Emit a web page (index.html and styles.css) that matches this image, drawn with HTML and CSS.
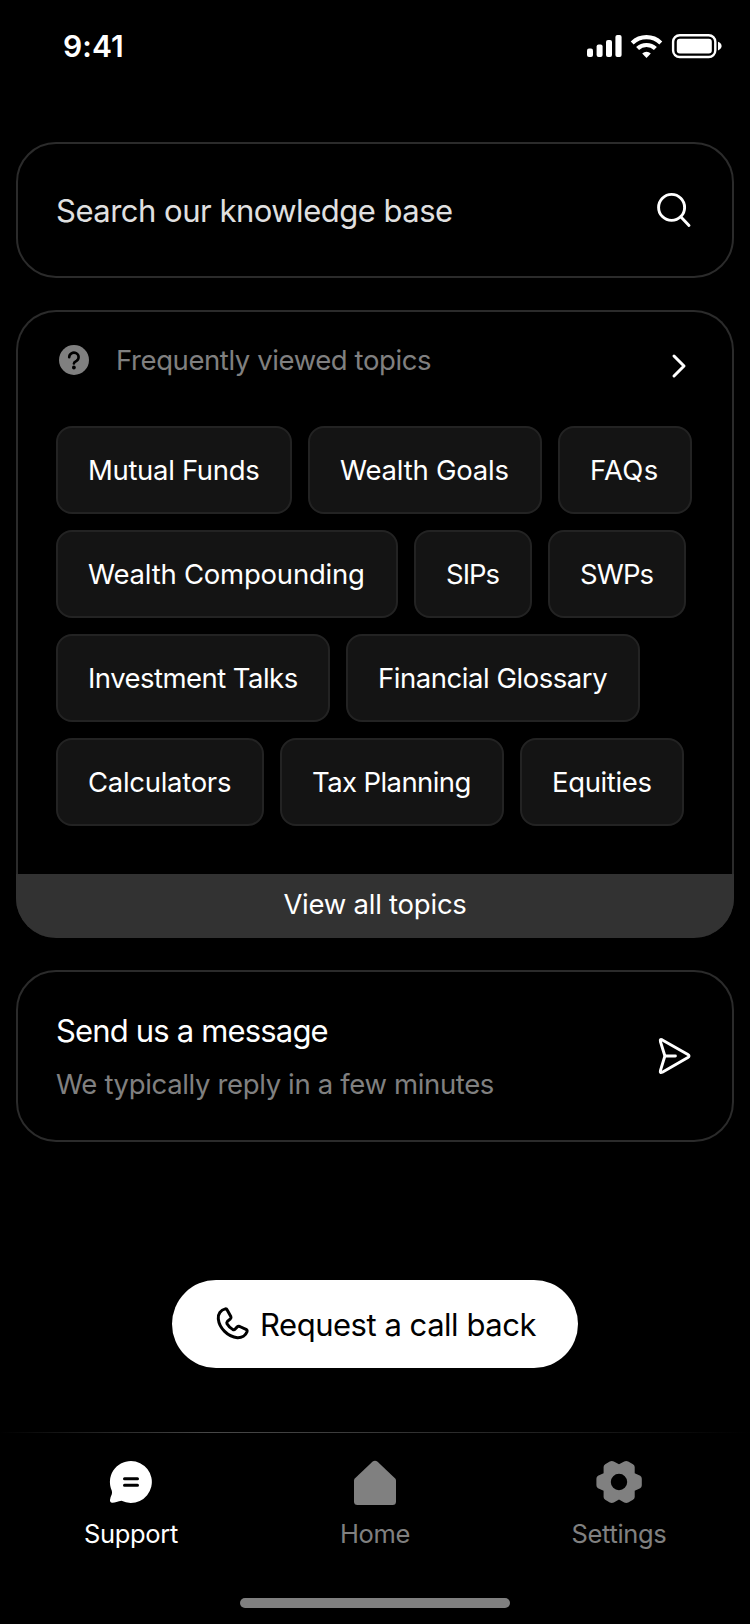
FILE: index.html
```html
<!DOCTYPE html>
<html lang="en">
<head>
<meta charset="utf-8">
<title>Support</title>
<link rel="stylesheet" href="styles.css">
</head>
<body>
<div class="screen">
  <header class="status">
    <span class="status__time">9:41</span>
    <svg class="status__icons" width="136" height="28" viewBox="586 32 136 28" fill="#fff">
      <rect x="587" y="48.6" width="6" height="8.4" rx="2"/>
      <rect x="596.6" y="44.6" width="6" height="12.4" rx="2"/>
      <rect x="606" y="40" width="6" height="17" rx="2"/>
      <rect x="615.4" y="35" width="6.2" height="22" rx="2"/>
      <g fill="none" stroke="#fff" stroke-width="4.2">
        <path d="M632.2 42.9A20.6 20.6 0 0 1 660.8 42.9"/>
        <path d="M637.6 48.6A12.8 12.8 0 0 1 655.4 48.6"/>
      </g>
      <path d="M646.5 57.9L642.2 53.4A6.2 6.2 0 0 1 650.8 53.4Z"/>
      <rect x="673.1" y="35.2" width="42.2" height="21.8" rx="6.6" fill="none" stroke="#fff" stroke-width="2.4"/>
      <rect x="676.8" y="38.8" width="35" height="14.6" rx="3"/>
      <path d="M718 41.8C720.4 42.6 721.6 44.2 721.6 46.1S720.4 49.6 718 50.4Z"/>
    </svg>
  </header>

  <main class="content">
    <section class="card search">
      <span class="search__text">Search our knowledge base</span>
      <svg class="icon" width="36" height="36" viewBox="656 192 36 36" fill="none" stroke="#fff" stroke-width="2.9" stroke-linecap="round">
        <circle cx="671.6" cy="207.4" r="13"/>
        <path d="M681 217L689 225.4"/>
      </svg>
    </section>

    <section class="card topics">
      <div class="topics__head">
        <svg width="30" height="30" viewBox="0 0 30 30">
          <circle cx="15" cy="15" r="15" fill="#808080"/>
          <path d="M10.2 12.2A4.7 4.5 0 1 1 17.5 15.9C15.8 16.9 14.9 17.5 14.9 18.4" fill="none" stroke="#000" stroke-width="2.6" stroke-linecap="round"/>
          <circle cx="14.9" cy="22.5" r="1.9"/>
        </svg>
        <h2 class="topics__title">Frequently viewed topics</h2>
        <svg class="topics__arrow" width="18" height="28" viewBox="0 0 18 28" fill="none" stroke="#fff" stroke-width="3" stroke-linecap="round" stroke-linejoin="round"><path d="M4 4L14 14L4 24"/></svg>
      </div>
      <div class="chips">
        <div class="chips__row">
          <span class="chip chip--funds">Mutual Funds</span><span class="chip chip--goals">Wealth Goals</span><span class="chip chip--faqs">FAQs</span>
        </div>
        <div class="chips__row">
          <span class="chip chip--compounding">Wealth Compounding</span><span class="chip chip--sips">SIPs</span><span class="chip chip--swps">SWPs</span>
        </div>
        <div class="chips__row">
          <span class="chip chip--talks">Investment Talks</span><span class="chip chip--glossary">Financial Glossary</span>
        </div>
        <div class="chips__row">
          <span class="chip chip--calculators">Calculators</span><span class="chip chip--tax">Tax Planning</span><span class="chip chip--equities">Equities</span>
        </div>
      </div>
      <div class="topics__all">View all topics</div>
    </section>

    <section class="card message">
      <div class="message__body">
        <h2 class="message__title">Send us a message</h2>
        <p class="message__note">We typically reply in a few minutes</p>
      </div>
      <svg class="icon" width="36" height="40" viewBox="656 1036 36 40" fill="none" stroke="#fff" stroke-width="2.9" stroke-linecap="round" stroke-linejoin="round">
        <path d="M662.3 1039.9L687.9 1054.6Q690.2 1056 687.9 1057.4L662.3 1072.2Q659.7 1073.4 660.4 1070.6L664.9 1056L660.4 1041.5Q659.7 1038.7 662.3 1039.9Z"/>
        <path d="M665 1056H675.4"/>
      </svg>
    </section>
  </main>

  <div class="call">
    <button class="call__button" type="button">
      <svg width="34" height="34" viewBox="216 1306 34 34" fill="none" stroke="#000" stroke-width="3" stroke-linejoin="round">
        <path d="M225.300 1308.900Q226.600 1308.700 227.200 1310L230.800 1316.400Q231.400 1317.800 230.400 1318.800L227.400 1321.400Q226.400 1322.500 227 1323.800C228.600 1326.500 230.400 1328.300 232.800 1329.500Q234.200 1330.100 235.200 1329L237.200 1326.900Q238.300 1325.900 239.700 1326.500L246 1329.400Q247.500 1330.200 247 1331.800C245.700 1335.600 241.800 1337.900 237.400 1337.700C227.800 1336.800 219.200 1328 218.300 1318.800C217.800 1314 220.800 1309.800 225.300 1308.900Z"/>
      </svg>
      <span>Request a call back</span>
    </button>
  </div>

  <nav class="tabs">
    <div class="tab tab--support">
      <svg class="tab__icon" width="48" height="46" viewBox="107 1460 48 46">
        <path d="M131 1461A21 21 0 1 1 121.500 1500.800Q119 1501 116.500 1502Q114 1503 111.800 1502.800Q109.700 1502.400 110 1500Q110.300 1497 111.800 1494.200Q112.200 1492.600 111.800 1490.700A21 21 0 0 1 131 1461Z" fill="#fff"/>
        <path d="M124.500 1478.700H137.500M124.500 1485.200H137.500" stroke="#000" stroke-width="3" stroke-linecap="round"/>
      </svg>
      <span>Support</span>
    </div>
    <div class="tab tab--home">
      <svg class="tab__icon" width="48" height="46" viewBox="351 1460 48 46" fill="#808080">
        <path d="M372.400 1461.700Q375 1459.900 377.600 1461.700L395.200 1478.600Q396 1479.400 396 1480.500V1501.500Q396 1505 392.500 1505H357.500Q354 1505 354 1501.500V1480.500Q354 1479.400 354.800 1478.600Z"/>
      </svg>
      <span>Home</span>
    </div>
    <div class="tab tab--settings">
      <svg class="tab__icon" width="48" height="46" viewBox="595 1460 48 46" fill="#808080">
        <path fill-rule="evenodd" d="M609.800 1461.400Q611.800 1460.500 613.800 1461.400L619 1464.200L624.200 1461.400Q626.200 1460.500 628.200 1461.400L633 1464.200Q634.700 1465.200 634.700 1467V1473.300L640.200 1475.800Q641.800 1476.800 641.800 1478.800V1485.200Q641.800 1487.200 640.200 1488.200L634.700 1490.700V1497Q634.700 1498.800 633 1499.800L628.200 1502.600Q626.200 1503.500 624.200 1502.600L619 1499.400L613.800 1502.600Q611.800 1503.500 609.800 1502.600L605.200 1499.800Q603.600 1498.800 603.600 1497V1490.700L598 1488.200Q596.400 1487.200 596.400 1485.200V1478.800Q596.400 1476.800 598 1475.800L603.600 1473.300V1467Q603.600 1465.200 605.200 1464.200ZM627.200 1482A8.200 8.200 0 1 0 610.800 1482A8.200 8.200 0 1 0 627.200 1482Z"/>
      </svg>
      <span>Settings</span>
    </div>
  </nav>
  <div class="home-indicator"></div>
</div>
</body>
</html>
```
FILE: styles.css
```css
* {
  box-sizing: border-box;
  margin: 0;
  padding: 0;
}

body {
  background: #000;
  color: #fff;
  font-family: "Inter", "Liberation Sans", sans-serif;
  font-size: 27.5px;
}

.screen {
  display: flex;
  flex-direction: column;
  width: 750px;
  height: 1624px;
  white-space: nowrap;
}

.status {
  display: flex;
  align-items: center;
  justify-content: space-between;
  height: 92px;
  margin-bottom: 50px;
  padding: 0 28px 0 63px;
}

.status__time {
  font-size: 30px;
  font-weight: 600;
  letter-spacing: 0.1px;
}

.content {
  display: flex;
  flex-direction: column;
  gap: 32px;
  padding: 0 16px;
}

.card {
  border: 2px solid #2b2b2b;
  border-radius: 40px;
}

.search {
  display: flex;
  align-items: center;
  justify-content: space-between;
  height: 136px;
  padding: 0 40px 0 38px;
}

.search__text {
  color: #e0e0e0;
  font-size: 31px;
  letter-spacing: -0.5px;
}

.topics {
  display: flex;
  flex-direction: column;
  height: 628px;
  border-bottom: 0;
}

.topics__head {
  display: flex;
  align-items: center;
  height: 96px;
  padding: 0 44px 0 41px;
}

.topics__title {
  margin-left: 27px;
  color: #808080;
  font-size: 27.5px;
  font-weight: 400;
  letter-spacing: -0.41px;
}

.topics__arrow {
  margin: 12px 0 0 auto;
}

.chips {
  display: flex;
  flex: 1;
  flex-direction: column;
  gap: 16px;
  padding: 18px 0 0 38px;
}

.chips__row {
  display: flex;
  gap: 16px;
}

.chip {
  display: flex;
  align-items: center;
  height: 88px;
  padding-left: 30px;
  border: 2px solid #232323;
  border-radius: 16px;
  background: #141414;
}

.chip--funds { width: 236px; letter-spacing: -0.33px; }
.chip--goals { width: 234px; letter-spacing: -0.22px; }
.chip--faqs { width: 134px; letter-spacing: 0.3px; }
.chip--compounding { width: 342px; letter-spacing: -0.22px; }
.chip--sips { width: 118px; letter-spacing: -1px; }
.chip--swps { width: 138px; letter-spacing: -0.9px; }
.chip--talks { width: 274px; letter-spacing: -0.54px; }
.chip--glossary { width: 294px; letter-spacing: -0.46px; }
.chip--calculators { width: 208px; letter-spacing: -0.29px; }
.chip--tax { width: 224px; letter-spacing: -0.6px; }
.chip--equities { width: 164px; letter-spacing: -0.36px; }

.topics__all {
  display: flex;
  align-items: center;
  justify-content: center;
  height: 64px;
  margin: 0 -2px;
  padding-bottom: 4px;
  border-radius: 0 0 40px 40px;
  background: #323232;
  letter-spacing: -0.24px;
}

.message {
  display: flex;
  align-items: center;
  justify-content: space-between;
  height: 172px;
  padding: 0 40px 0 38px;
}

.message__body {
  display: flex;
  flex-direction: column;
  gap: 13px;
  padding-top: 3px;
}

.message__title {
  font-size: 31px;
  font-weight: 400;
  line-height: 40px;
  letter-spacing: -0.83px;
}

.message__note {
  color: #808080;
  line-height: 40px;
  letter-spacing: -0.35px;
}

.call {
  display: flex;
  justify-content: center;
  margin-top: 138px;
}

.call__button {
  display: flex;
  align-items: center;
  gap: 10px;
  width: 406px;
  height: 88px;
  padding-left: 44px;
  border: 0;
  border-radius: 44px;
  background: #fff;
  color: #000;
  font-family: inherit;
  font-size: 31px;
  letter-spacing: -0.47px;
}

.call__button svg {
  margin-top: -2px;
}

.tabs {
  display: grid;
  grid-template-columns: repeat(3, 244px);
  justify-content: center;
  margin-top: 64px;
  padding-top: 27px;
  border-top: 1px solid;
  border-image: linear-gradient(90deg, #000, #484848 28%, #3c3c3c 45%, #1c1c1c 75%, #000) 1;
}

.tab {
  display: flex;
  flex-direction: column;
  align-items: center;
  gap: 12px;
  color: #808080;
  font-size: 25.5px;
  line-height: 32px;
}

.tab--support { color: #fff; letter-spacing: -0.3px; }
.tab--home { letter-spacing: -0.3px; }
.tab--settings { letter-spacing: -0.35px; }

.home-indicator {
  width: 270px;
  height: 10px;
  margin: auto auto 16px;
  border-radius: 5px;
  background: #808080;
}
```
